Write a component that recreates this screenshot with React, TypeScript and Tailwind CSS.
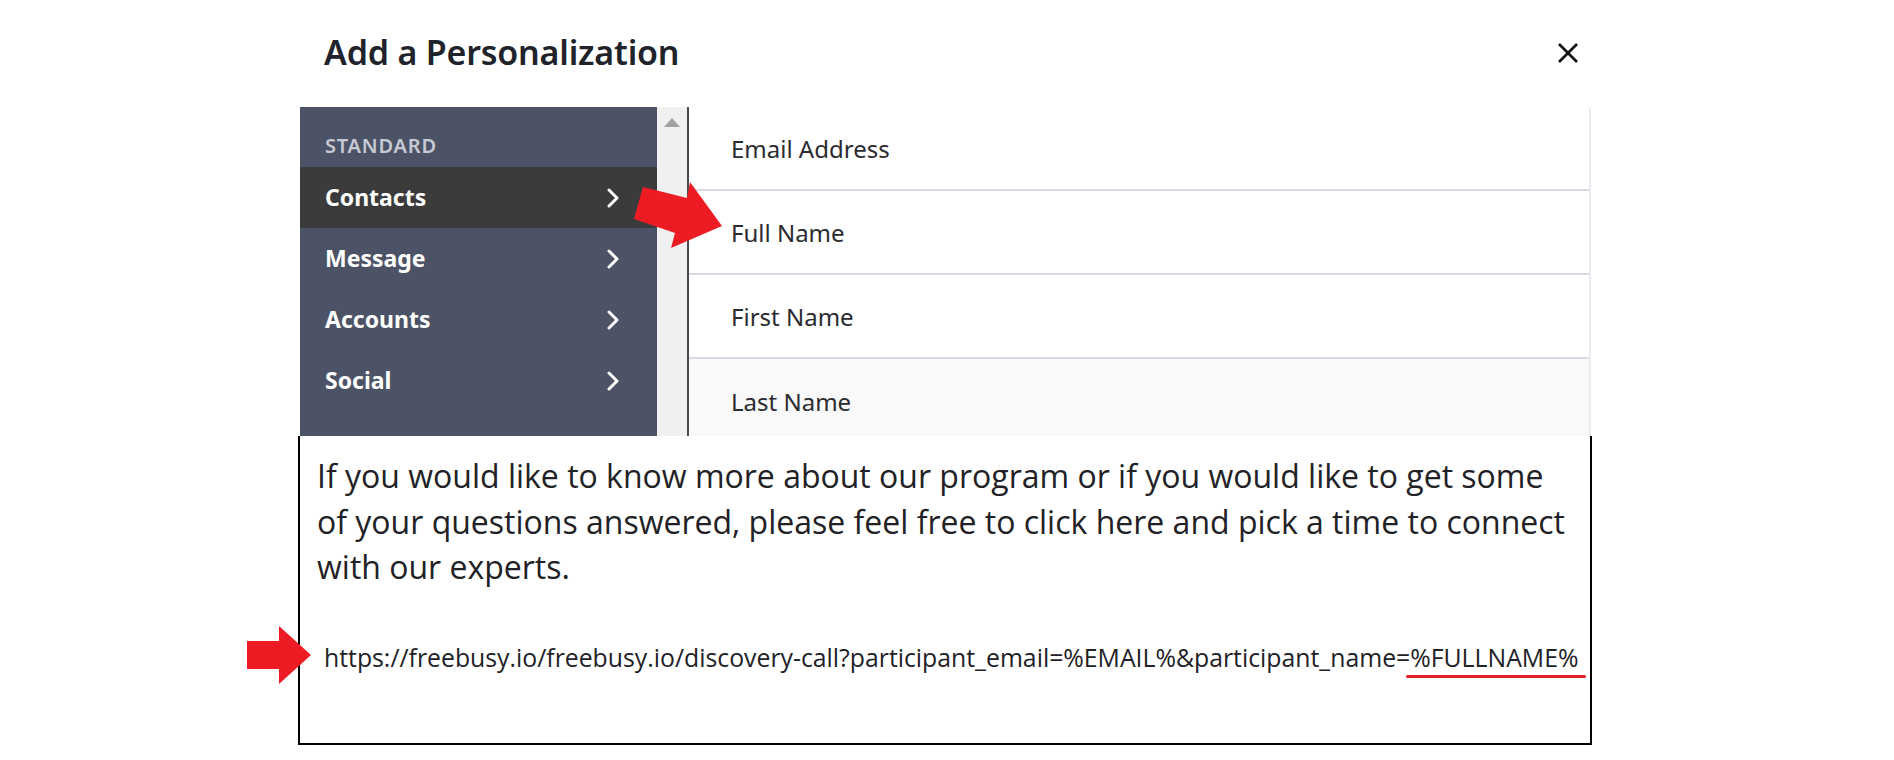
import React from "react"

const categories = ["Contacts", "Message", "Accounts", "Social"]
const fields = ["Email Address", "Full Name", "First Name", "Last Name"]

const lines = [
  "If you would like to know more about our program or if you would like to get some",
  "of your questions answered, please feel free to click here and pick a time to connect",
  "with our experts.",
]

function Chevron() {
  return (
    <svg width="14" height="20" viewBox="0 0 14 20" fill="none">
      <polyline
        points="3,2 11,10 3,18"
        stroke="white"
        strokeWidth="3"
        strokeLinecap="round"
        strokeLinejoin="round"
      />
    </svg>
  )
}

export default function App() {
  return (
    <div className="w-[1894px] h-[760px] bg-white relative overflow-hidden font-['Noto_Sans',sans-serif]">
      {/* modal header */}
      <div className="flex items-center justify-between w-[1292px] ml-[300px] h-[107px] pb-[2px]">
        <h1 className="pl-[24px] text-[34px] font-semibold text-[#21232b] tracking-[-0.2px]">
          Add a Personalization
        </h1>
        <svg width="22" height="22" viewBox="0 0 22 22" className="mr-[13px] mt-[1px]">
          <line x1="2" y1="2" x2="20" y2="20" stroke="#111" strokeWidth="2.6" />
          <line x1="20" y1="2" x2="2" y2="20" stroke="#111" strokeWidth="2.6" />
        </svg>
      </div>

      {/* modal body */}
      <div className="flex ml-[300px] w-[1291px] h-[329px] overflow-hidden">
        <div className="w-[357px] bg-[#4d5366] flex flex-col">
          <div className="h-[60px] pt-[27px] pl-[25px] text-[20px] leading-[24px] font-semibold text-[#c6cad4] tracking-[0.8px]">
            STANDARD
          </div>
          {categories.map((c, i) => (
            <div
              key={c}
              className={`h-[61px] flex items-center justify-between pl-[25px] pr-[37px] ${
                i === 0 ? "bg-[#3b3b3c]" : ""
              }`}
            >
              <span className="text-[23px] font-bold text-white">{c}</span>
              <Chevron />
            </div>
          ))}
        </div>
        <div className="w-[30px] bg-[#f0f0f0] flex justify-center pt-[11px]">
          <div className="w-0 h-0 border-l-[8px] border-r-[8px] border-b-[9px] border-l-transparent border-r-transparent border-b-[#a3a3a3]" />
        </div>
        <div className="w-[2px] bg-[#4a4a4a]" />
        <div className="flex-1 flex flex-col border-r-[2px] border-[#ececf0]">
          {fields.map((f, i) => (
            <div
              key={f}
              className={`h-[84px] shrink-0 flex items-center pl-[42px] pt-[2px] text-[24px] text-[#2b2b30] ${
                i < 3 ? "border-b-[2px] border-[#d7dae3] bg-white" : "bg-[#f9f9f9]"
              }`}
            >
              {f}
            </div>
          ))}
        </div>
      </div>

      {/* text box */}
      <div className="ml-[298px] w-[1294px] h-[309px] border-l-[2px] border-r-[2px] border-b-[2px] border-black font-['Open_Sans',sans-serif] text-[#222226] pt-[17px] pl-[17px]">
        <p className="text-[32px] leading-[45.5px] whitespace-nowrap">
          {lines.map((l) => (
            <span key={l} className="block">
              {l}
            </span>
          ))}
        </p>
        <p className="mt-[45px] pl-[7px] text-[24.8px] leading-[45px] whitespace-nowrap">
          https://freebusy.io/freebusy.io/discovery-call?participant_email=%EMAIL%&amp;participant_name=
          <span className="relative">
            %FULLNAME%
            <span className="absolute left-[-4px] right-[-8px] bottom-[-4px] h-[3px] rounded-full bg-[#e8202c]" />
          </span>
        </p>
      </div>

      {/* annotation arrows */}
      <svg className="absolute left-0 top-0 pointer-events-none" width="1894" height="760">
        <polygon
          points="643,187 687,198 690,182 722,226 671,248 675,233 634,219"
          fill="#ed1c24"
        />
        <polygon
          points="247,641 279,641 279,626 311,655 279,684 279,669 247,669"
          fill="#ed1c24"
        />
      </svg>
    </div>
  )
}
